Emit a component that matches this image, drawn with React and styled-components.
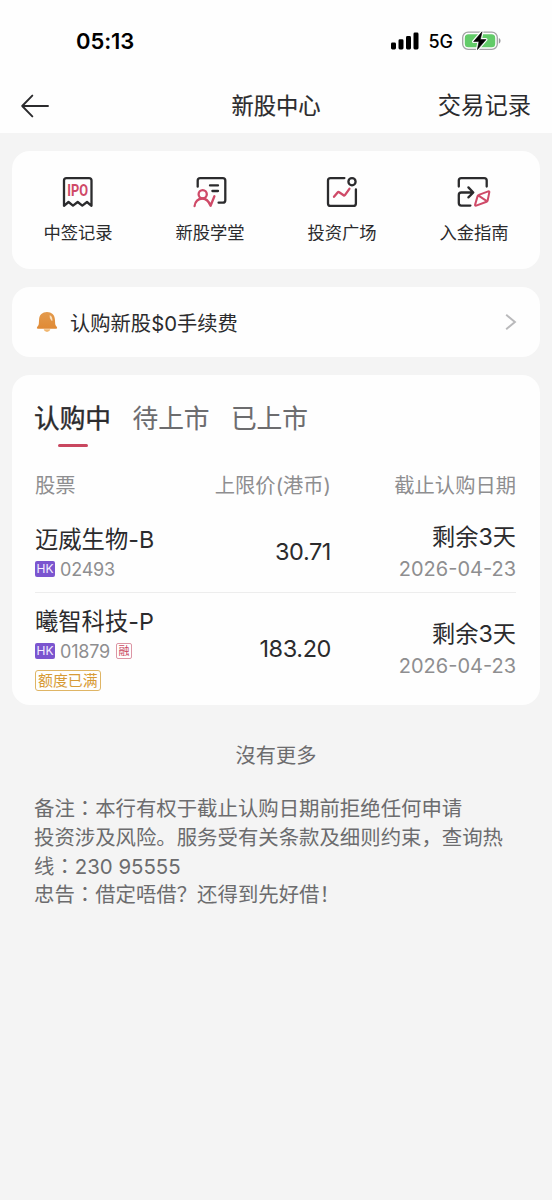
import React from 'react';
import styled, { createGlobalStyle } from 'styled-components';

const GlobalStyle = createGlobalStyle`
  * {
    box-sizing: border-box;
  }

  body {
    margin: 0;
    background-color: #f4f4f4;
    color: #2b2b2d;
    font-family: Inter, "Noto Sans CJK SC", sans-serif;
    -webkit-font-smoothing: antialiased;
  }
`;

const Page = styled.div`
  width: 100%;
  min-height: 1200px;
  background-color: #f4f4f4;
`;

const Top = styled.header`
  height: 133px;
  background-color: #fefefe;
`;

const StatusBar = styled.div`
  display: flex;
  justify-content: space-between;
  align-items: center;
  height: 82px;
  padding: 0 51px 0 76px;
`;

const Clock = styled.span`
  color: #000;
  font-size: 22px;
  font-weight: 600;
  letter-spacing: -0.1px;
`;

const StatusIcons = styled.div`
  display: flex;
  align-items: center;
`;

const Network = styled.span`
  margin: 1px 9px 0 9px;
  color: #000;
  font-size: 18px;
  font-weight: 500;
`;

const Nav = styled.nav`
  display: grid;
  grid-template-columns: 1fr auto 1fr;
  align-items: center;
  height: 48px;
  padding: 0 21px;
`;

const Title = styled.h1`
  margin: 0;
  font-size: 22.3px;
  font-weight: 400;
  line-height: 30px;
  -webkit-text-stroke: 0.2px currentColor;
`;

const NavLink = styled.a`
  justify-self: end;
  font-size: 23.3px;
  line-height: 30px;
`;

const Main = styled.main`
  display: flex;
  flex-direction: column;
  gap: 18px;
  padding: 18px 12px 0;
`;

const Card = styled.section`
  background-color: #fefefe;
  border-radius: 18px;
`;

const Shortcuts = styled(Card)`
  display: grid;
  grid-template-columns: repeat(4, 1fr);
  height: 118px;
  padding-top: 23px;
`;

const Shortcut = styled.a`
  display: flex;
  flex-direction: column;
  align-items: center;
  gap: 10px;
  font-size: 17.3px;
  line-height: 26px;
`;

const Notice = styled(Card)`
  display: flex;
  align-items: center;
  height: 70px;
  padding: 0 23px 0 24px;
`;

const NoticeText = styled.span`
  flex: 1;
  margin-left: 12px;
  font-size: 20.3px;
`;

const Listing = styled(Card)`
  height: 330px;
  padding: 26px 24px 0 22px;
`;

const Tabs = styled.div`
  display: flex;
  gap: 21.4px;
`;

const Tab = styled.button`
  display: flex;
  flex-direction: column;
  align-items: center;
  padding: 0;
  border: none;
  background: none;
  color: ${props => props.$active ? '#2b2b2d' : '#6c6c6e'};
  font-family: inherit;
  font-size: 25.7px;
  font-weight: 400;
  line-height: 36px;
  -webkit-text-stroke: ${props => props.$active ? '0.4px' : '0.1px'} currentColor;

  &::after {
    content: '';
    width: 30px;
    height: 3px;
    margin-top: 7px;
    border-radius: 2px;
    background-color: ${props => props.$active ? '#c9475f' : 'transparent'};
  }
`;

const Row = styled.div`
  display: grid;
  grid-template-columns: 150px 146px 1fr;
  margin-left: 1px;
`;

const HeadRow = styled(Row)`
  height: 40px;
  margin-top: 18px;
  color: #8e8e90;
  font-size: 20.3px;
  line-height: 41px;
`;

const StockRow = styled(Row)`
  height: ${props => props.$height}px;
  border-top: ${props => props.$divided ? '1px solid #ededed' : 'none'};
`;

const Cell = styled.div`
  text-align: right;
  white-space: nowrap;
`;

const HeadStock = styled.div`
  text-align: left;
`;

const StockCell = styled.div`
  display: flex;
  flex-direction: column;
  padding-top: ${props => props.$top}px;
`;

const Name = styled.div`
  font-size: 23.3px;
  line-height: 32px;
  white-space: nowrap;
`;

const CodeLine = styled.div`
  display: flex;
  align-items: center;
  height: 26px;
`;

const Market = styled.span`
  width: 20px;
  height: 16px;
  border-radius: 2px;
  background-color: #7b55cf;
  color: #f4efff;
  font-size: 12px;
  line-height: 16px;
  text-align: center;
`;

const Code = styled.span`
  margin-left: 5px;
  color: #8e8e90;
  font-size: 18px;
  letter-spacing: -0.2px;
`;

const Margin = styled.span`
  width: 16px;
  height: 16px;
  margin-left: 6px;
  border: 1px solid #dc96a5;
  border-radius: 2px;
  color: #c9475f;
  font-size: 11px;
  line-height: 14px;
  text-align: center;
`;

const Quota = styled.span`
  align-self: flex-start;
  height: 21px;
  margin-top: 6px;
  padding: 0 2px;
  border: 1px solid #dfb565;
  border-radius: 3px;
  color: #d79a35;
  font-size: 14.9px;
  line-height: 20px;
`;

const Price = styled(Cell)`
  padding-top: ${props => props.$top}px;
  font-size: 23.5px;
  line-height: 30px;
  letter-spacing: -0.4px;
`;

const Deadline = styled(Cell)`
  padding-top: ${props => props.$top}px;
`;

const Remaining = styled.div`
  font-size: 23.2px;
  line-height: 32px;
`;

const Day = styled.div`
  color: #8e8e90;
  font-size: 20px;
  line-height: 32px;
`;

const NoMore = styled.p`
  margin: 15px 0 0;
  color: #6c6c6e;
  font-size: 20.2px;
  line-height: 36px;
  text-align: center;
`;

const Remarks = styled.div`
  margin-top: 3px;
  padding: 0 22px;
  color: #6c6c6e;
  font-size: 20.4px;
  line-height: 28.8px;
  white-space: nowrap;
`;

const Colon = styled.span`
  font-family: "Noto Sans CJK TC", sans-serif;
  line-height: 0;
`;

const dark = {
  fill: 'none',
  stroke: '#2b2b2d',
  strokeWidth: 2.3,
  strokeLinecap: 'round',
  strokeLinejoin: 'round',
};

const accent = { ...dark, stroke: '#cf4a68' };

const RecordIcon = () => (
  <svg width="36" height="36" viewBox="0 0 36 36">
    <path {...dark} d="M4 31.8V6.6Q4 4.1 6.5 4.1H29Q31.5 4.1 31.5 6.6V31.8L27 28L22.3 31.6L17.7 28L13 31.6L8.5 28Z" />
    <text x="7.2" y="22" fill="#cf4a68" fontFamily="Roboto" fontSize="15.6" fontWeight="700" textLength="20.8" lengthAdjust="spacingAndGlyphs">IPO</text>
  </svg>
);

const SchoolIcon = () => (
  <svg width="36" height="36" viewBox="0 0 36 36">
    <path {...dark} d="M5.7 12.7V6.6Q5.7 4.1 8.2 4.1H30.8Q33.3 4.1 33.3 6.6V26.2Q33.3 28.7 30.8 28.7H26.6M18 11.4H26M20.4 17H26" />
    <circle {...accent} cx="10.7" cy="20.2" r="4.1" />
    <path {...accent} d="M2.6 32C2.9 27.6 6.2 24.5 10.5 24.5C14.6 24.5 17 27.8 18.6 31.8L22.4 22.3" />
  </svg>
);

const PlazaIcon = () => (
  <svg width="36" height="36" viewBox="0 0 36 36">
    <path {...dark} d="M20.4 4.1H6.5Q4 4.1 4 6.6V29.4Q4 31.9 6.5 31.9H29.4Q31.9 31.9 31.9 29.4V15.4" />
    <circle {...dark} cx="28" cy="7.7" r="3.6" />
    <path {...accent} d="M10 22.8L13.6 18.4Q14.3 17.6 15.2 18.2L19.6 21.2Q20.5 21.8 21.1 20.9L25.4 14.8" />
  </svg>
);

const GuideIcon = () => (
  <svg width="36" height="36" viewBox="0 0 36 36">
    <path {...dark} d="M2.8 12.6V6.6Q2.8 4.1 5.3 4.1H28.2Q30.7 4.1 30.7 6.6V12.6M14.4 31.6H5.3Q2.8 31.6 2.8 29.1V21Q2.8 18.5 5.3 18.5H16.8M12.4 13.4L17.3 18.5L12.4 23.4" />
    <path {...accent} strokeWidth="2" d="M22.8 20.9L32.2 17.4Q33.6 17 33.3 18.4L31.6 26.8Q31.4 27.5 30.6 27.8L20.2 31.6Q18.8 32 19.1 30.6L21.6 22.1Q21.9 21.2 22.8 20.9ZM22.2 21.4L31.2 27.3" />
  </svg>
);

const BackIcon = () => (
  <svg width="28" height="24" viewBox="0 0 28 24">
    <path {...dark} strokeWidth="1.9" d="M27 12H1.2M11.3 1.6L1.2 12L11.3 22.4" />
  </svg>
);

const SignalIcon = () => (
  <svg width="28" height="18" viewBox="0 0 28 18">
    <rect x="0" y="10.5" width="5" height="7" rx="1.4" />
    <rect x="7.5" y="7.3" width="5" height="10.2" rx="1.4" />
    <rect x="15" y="4" width="5" height="13.5" rx="1.4" />
    <rect x="22.5" y="0.5" width="5" height="17" rx="1.4" />
  </svg>
);

const BatteryIcon = () => (
  <svg width="39" height="20" viewBox="0 0 39 20">
    <rect x="0.7" y="1.2" width="34.6" height="17.2" rx="5.4" fill="none" stroke="#a2a2a4" strokeWidth="1.3" />
    <path d="M36.8 7Q38.6 7.8 38.6 9.8T36.8 12.7Z" fill="#98989a" />
    <rect x="2.8" y="3.3" width="30.4" height="13" rx="3.6" fill="#63cb69" />
    <path d="M20 0.8L11.6 10.6H17L15.4 18.6L24 8.6H18.4Z" stroke="#fefefe" strokeWidth="3" strokeLinejoin="round" />
    <path d="M20 0.8L11.6 10.6H17L15.4 18.6L24 8.6H18.4Z" stroke="#000" strokeWidth="0.6" strokeLinejoin="round" />
  </svg>
);

const BellIcon = () => (
  <svg width="22" height="22" viewBox="0 0 22 22">
    <defs>
      <linearGradient id="bell" x1="0" y1="0" x2="0" y2="1">
        <stop offset="0" stopColor="#e39a4c" />
        <stop offset="1" stopColor="#e08a35" />
      </linearGradient>
    </defs>
    <path fill="#f0b66f" d="M7.6 18.2H14.4Q13.6 21 11 21T7.6 18.2Z" />
    <path fill="url(#bell)" d="M11 1C15.6 1 18.7 4 18.9 8.2L19.2 13Q19.3 14.3 20.5 15.6Q22 17.8 20 17.8H2Q0 17.8 1.5 15.6Q2.7 14.3 2.8 13L3.1 8.2C3.3 4 6.4 1 11 1Z" />
    <path fill="#f9dfbd" d="M13.6 4.2Q16.2 4.7 16.5 9.3Q16.4 10.3 15.3 9.5Q13.4 8 13.6 4.2Z" />
  </svg>
);

const ChevronIcon = () => (
  <svg width="12" height="18" viewBox="0 0 12 18">
    <path d="M1.2 1.8L9.9 9L1.2 16.2" fill="none" stroke="#b9b9bb" strokeWidth="2" />
  </svg>
);

const shortcuts = [
  { label: '中签记录', Icon: RecordIcon },
  { label: '新股学堂', Icon: SchoolIcon },
  { label: '投资广场', Icon: PlazaIcon },
  { label: '入金指南', Icon: GuideIcon },
];

const tabs = ['认购中', '待上市', '已上市'];

const stocks = [
  { name: '迈威生物-B', code: '02493', price: '30.71', left: '剩余3天', date: '2026-04-23', height: 87, tops: [19, 32, 16] },
  { name: '曦智科技-P', code: '01879', price: '183.20', left: '剩余3天', date: '2026-04-23', height: 112, tops: [13, 41, 25], margin: true, quota: '额度已满' },
];

export default class App extends React.Component {
  state = { tab: 0 };

  render() {
    return (
      <Page>
        <GlobalStyle />
        <Top>
          <StatusBar>
            <Clock>05:13</Clock>
            <StatusIcons>
              <SignalIcon />
              <Network>5G</Network>
              <BatteryIcon />
            </StatusIcons>
          </StatusBar>
          <Nav>
            <BackIcon />
            <Title>新股中心</Title>
            <NavLink>交易记录</NavLink>
          </Nav>
        </Top>
        <Main>
          <Shortcuts>
            {shortcuts.map(({ label, Icon }) => (
              <Shortcut key={label}><Icon />{label}</Shortcut>
            ))}
          </Shortcuts>
          <Notice>
            <BellIcon />
            <NoticeText>认购新股$0手续费</NoticeText>
            <ChevronIcon />
          </Notice>
          <Listing>
            <Tabs>
              {tabs.map((label, i) => (
                <Tab key={label} $active={this.state.tab === i} onClick={() => this.setState({ tab: i })}>{label}</Tab>
              ))}
            </Tabs>
            <HeadRow>
              <HeadStock>股票</HeadStock>
              <Cell>上限价(港币)</Cell>
              <Cell>截止认购日期</Cell>
            </HeadRow>
            {stocks.map((stock, i) => (
              <StockRow key={stock.code} $height={stock.height} $divided={i > 0}>
                <StockCell $top={stock.tops[0]}>
                  <Name>{stock.name}</Name>
                  <CodeLine>
                    <Market>HK</Market>
                    <Code>{stock.code}</Code>
                    {stock.margin && <Margin>融</Margin>}
                  </CodeLine>
                  {stock.quota && <Quota>{stock.quota}</Quota>}
                </StockCell>
                <Price $top={stock.tops[1]}>{stock.price}</Price>
                <Deadline $top={stock.tops[2]}>
                  <Remaining>{stock.left}</Remaining>
                  <Day>{stock.date}</Day>
                </Deadline>
              </StockRow>
            ))}
          </Listing>
          <NoMore>沒有更多</NoMore>
          <Remarks>
            备注<Colon>：</Colon>本行有权于截止认购日期前拒绝任何申请<br />
            投资涉及风险。服务受有关条款及细则约束，查询热<br />
            线<Colon>：</Colon>230 95555<br />
            忠告<Colon>：</Colon>借定唔借？还得到先好借！
          </Remarks>
        </Main>
      </Page>
    );
  }
}
